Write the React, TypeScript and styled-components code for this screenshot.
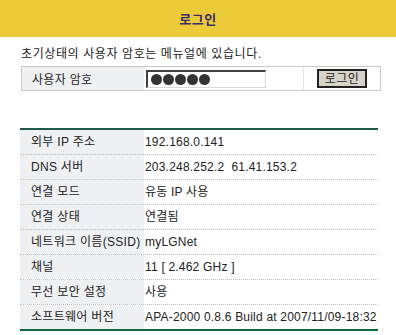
import React from "react";
import styled, { createGlobalStyle } from "styled-components";

const Global = createGlobalStyle`
  html, body { margin: 0; padding: 0; background: #fff; }
  body { font-family: "Liberation Sans", "Noto Sans CJK KR", sans-serif; font-size: 12px; color: #222; letter-spacing: 0.3px; }
`;

const Page = styled.div`
  width: 396px;
  height: 335px;
  overflow: hidden;
`;

const Header = styled.div`
  height: 37px;
  background: #ebcb38;
  display: flex;
  align-items: center;
  justify-content: center;
`;

const Title = styled.h1`
  margin: 0;
  font-size: 13px;
  font-weight: bold;
  color: #3a2c6a;
  line-height: 1;
  padding-top: 1px;
  letter-spacing: 0.5px;
`;

const Body = styled.div`
  padding: 9px 15px 0 20px;
`;

const Note = styled.div`
  line-height: 16px;
  padding-left: 1px;
  letter-spacing: 0.6px;
`;

const LoginBox = styled.div`
  margin: 4px 0 0 1px;
  width: 358px;
  height: 23px;
  border: 1px solid #c9c9c9;
  display: flex;
`;

const LoginLabel = styled.div`
  width: 112px;
  flex-shrink: 0;
  background: #eef0f2;
  padding-left: 10px;
  display: flex;
  align-items: center;
`;

const InputCell = styled.div`
  width: 157px;
  flex-shrink: 0;
  border-right: 1px solid #e6e6e6;
  display: flex;
  align-items: center;
  padding-left: 2px;
`;

const PasswordBox = styled.div`
  width: 114px;
  height: 15px;
  border-top: 2px solid #404040;
  border-left: 2px solid #404040;
  border-right: 1px solid #d8d8d8;
  border-bottom: 1px solid #d8d8d8;
  background: #fff;
  display: flex;
  align-items: center;
  gap: 1px;
  padding-left: 3px;
`;

const Dot = styled.span`
  width: 11px;
  height: 11px;
  border-radius: 50%;
  background: #333;
`;

const ButtonCell = styled.div`
  flex: 1;
  display: flex;
  align-items: center;
  padding-left: 13px;
`;

const LoginButton = styled.button`
  width: 50px;
  height: 19px;
  padding: 0;
  background: #d6d3c9;
  border: 2px solid #222;
  font-family: "Liberation Sans", "Noto Sans CJK KR", sans-serif;
  font-size: 12px;
  letter-spacing: 0.5px;
  color: #222;
  line-height: 1;
`;

const InfoTable = styled.div`
  margin-top: 37px;
  width: 358px;
  border-top: 2px solid #1d5a4a;
  border-bottom: 2px solid #0b6a3c;
`;

const Row = styled.div<{ $last?: boolean }>`
  display: flex;
  height: 24px;
  border-bottom: ${(p) => (p.$last ? "none" : "1px dotted #bdbdbd")};
`;

const Label = styled.div`
  width: 113px;
  flex-shrink: 0;
  background: #eef0f2;
  padding-left: 11px;
  display: flex;
  align-items: center;
  white-space: nowrap;
  line-height: 14px;
`;

const Value = styled.div`
  flex: 1;
  min-width: 0;
  padding-left: 1px;
  display: flex;
  align-items: center;
  white-space: pre;
  line-height: 14px;
  letter-spacing: 0.2px;
`;

const rows: [string, string][] = [
  ["외부 IP 주소", "192.168.0.141"],
  ["DNS 서버", "203.248.252.2  61.41.153.2"],
  ["연결 모드", "유동 IP 사용"],
  ["연결 상태", "연결됨"],
  ["네트워크 이름(SSID)", "myLGNet"],
  ["채널", "11 [ 2.462 GHz ]"],
  ["무선 보안 설정", "사용"],
  ["소프트웨어 버전", "APA-2000 0.8.6 Build at 2007/11/09-18:32"],
];

export default function App() {
  return (
    <Page>
      <Global />
      <Header>
        <Title>로그인</Title>
      </Header>
      <Body>
        <Note>초기상태의 사용자 암호는 메뉴얼에 있습니다.</Note>
        <LoginBox>
          <LoginLabel>사용자 암호</LoginLabel>
          <InputCell>
            <PasswordBox>
              {[0, 1, 2, 3, 4].map((i) => (
                <Dot key={i} />
              ))}
            </PasswordBox>
          </InputCell>
          <ButtonCell>
            <LoginButton>로그인</LoginButton>
          </ButtonCell>
        </LoginBox>
        <InfoTable>
          {rows.map(([l, v], i) => (
            <Row key={l} $last={i === rows.length - 1}>
              <Label>{l}</Label>
              <Value>{v}</Value>
            </Row>
          ))}
        </InfoTable>
      </Body>
    </Page>
  );
}
